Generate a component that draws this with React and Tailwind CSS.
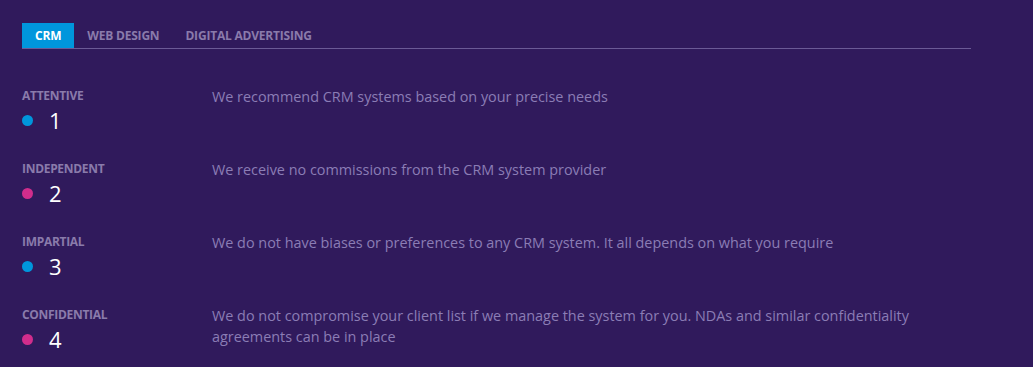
import React from "react";

const tabs = ["CRM", "Web Design", "Digital Advertising"];

const items = [
  { label: "Attentive", n: 1, dot: "bg-[#0096dc]", text: "We recommend CRM systems based on your precise needs" },
  { label: "Independent", n: 2, dot: "bg-[#d12d8c]", text: "We receive no commissions from the CRM system provider" },
  { label: "Impartial", n: 3, dot: "bg-[#0096dc]", text: "We do not have biases or preferences to any CRM system. It all depends on what you require" },
  {
    label: "Confidential",
    n: 4,
    dot: "bg-[#d12d8c]",
    text: "We do not compromise your client list if we manage the system for you. NDAs and similar confidentiality agreements can be in place",
  },
];

export default function App() {
  return (
    <div className="min-h-[367px] w-full bg-[#301a5c] pl-[22px] pt-[23px] font-['Open_Sans',sans-serif]">
      {/* tabs */}
      <div className="flex w-[949px] border-b border-[#6b5a96]">
        {tabs.map((t, i) => (
          <div
            key={t}
            className={
              i === 0
                ? "h-[25px] flex items-center px-[13px] bg-[#0096dc] text-white text-[12px] font-bold uppercase tracking-[-0.2px]"
                : "h-[25px] flex items-center px-[13px] text-[#8a7bab] text-[12px] font-bold uppercase tracking-[-0.2px]"
            }
          >
            {t}
          </div>
        ))}
      </div>

      {/* list */}
      <div className="flex flex-col pt-[39px]">
        {items.map((it) => (
          <div key={it.n} className="flex h-[73px]">
            <div className="w-[190px] shrink-0">
              <div className="text-[12px] leading-[16px] font-bold uppercase text-[#8a7bab] tracking-[-0.3px]">{it.label}</div>
              <div className="flex items-center mt-[3px] h-[26px]">
                <span className={"w-[11px] h-[11px] rounded-full " + it.dot}></span>
                <span className="ml-[16px] text-[22px] leading-[26px] text-white">{it.n}</span>
              </div>
            </div>
            <p className="w-[720px] text-[14.4px] leading-[21px] text-[#8b7db5] -mt-[2px]">{it.text}</p>
          </div>
        ))}
      </div>
    </div>
  );
}
